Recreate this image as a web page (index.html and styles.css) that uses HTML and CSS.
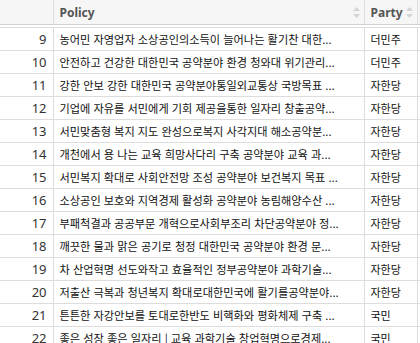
FILE: index.html
```html
<!DOCTYPE html>
<html lang="ko">
<head>
<meta charset="utf-8">
<link rel="stylesheet" href="styles.css">
</head>
<body>
<div class="frame">
  <table class="head">
    <colgroup><col class="c-num"><col class="c-pol"><col class="c-par"><col class="c-rest"></colgroup>
    <tr>
      <th></th>
      <th><div class="th-in"><span>Policy</span><svg class="sort" width="7" height="11" viewBox="0 0 7 11"><path d="M3.5 0 L7 4 L0 4 Z M3.5 11 L7 7 L0 7 Z" fill="#d4d4d4"/></svg></div></th>
      <th><div class="th-in"><span>Party</span><svg class="sort" width="7" height="11" viewBox="0 0 7 11"><path d="M3.5 0 L7 4 L0 4 Z M3.5 11 L7 7 L0 7 Z" fill="#d4d4d4"/></svg></div></th>
      <th></th>
    </tr>
  </table>
  <div class="gap"></div>
  <table class="body">
    <colgroup><col class="c-num"><col class="c-pol"><col class="c-par"><col class="c-rest"></colgroup>
    <tr><td class="num">9</td><td class="pol">농어민 자영업자 소상공인의소득이 늘어나는 활기찬 대한...</td><td class="par">더민주</td><td></td></tr>
    <tr><td class="num">10</td><td class="pol">안전하고 건강한 대한민국 공약분야 환경 청와대 위기관리...</td><td class="par">더민주</td><td></td></tr>
    <tr><td class="num">11</td><td class="pol">강한 안보 강한 대한민국 공약분야통일외교통상 국방목표 ...</td><td class="par">자한당</td><td></td></tr>
    <tr><td class="num">12</td><td class="pol">기업에 자유를 서민에게 기회 제공을통한 일자리 창출공약...</td><td class="par">자한당</td><td></td></tr>
    <tr><td class="num">13</td><td class="pol">서민맞춤형 복지 지도 완성으로복지 사각지대 해소공약분...</td><td class="par">자한당</td><td></td></tr>
    <tr><td class="num">14</td><td class="pol">개천에서 용 나는 교육 희망사다리 구축 공약분야 교육 과...</td><td class="par">자한당</td><td></td></tr>
    <tr><td class="num">15</td><td class="pol">서민복지 확대로 사회안전망 조성 공약분야 보건복지 목표 ...</td><td class="par">자한당</td><td></td></tr>
    <tr><td class="num">16</td><td class="pol">소상공인 보호와 지역경제 활성화 공약분야 농림해양수산 ...</td><td class="par">자한당</td><td></td></tr>
    <tr><td class="num">17</td><td class="pol">부패척결과 공공부문 개혁으로사회부조리 차단공약분야 정...</td><td class="par">자한당</td><td></td></tr>
    <tr><td class="num">18</td><td class="pol">깨끗한 물과 맑은 공기로 청정 대한민국 공약분야 환경 문...</td><td class="par">자한당</td><td></td></tr>
    <tr><td class="num">19</td><td class="pol">차 산업혁명 선도와작고 효율적인 정부공약분야 과학기술...</td><td class="par">자한당</td><td></td></tr>
    <tr><td class="num">20</td><td class="pol">저출산 극복과 청년복지 확대로대한민국에 활기를공약분야...</td><td class="par">자한당</td><td></td></tr>
    <tr><td class="num">21</td><td class="pol">튼튼한 자강안보를 토대로한반도 비핵화와 평화체제 구축 ...</td><td class="par">국민</td><td></td></tr>
    <tr><td class="num">22</td><td class="pol">좋은 성장 좋은 일자리 | 교육 과학기술 창업혁명으로경제...</td><td class="par">국민</td><td></td></tr>
  </table>
</div>
</body>
</html>
```
FILE: styles.css
```css
html, body {
  margin: 0;
  padding: 0;
  background: #ffffff;
}
.frame {
  width: 420px;
  height: 343px;
  overflow: hidden;
  font-family: "Noto Sans", "Noto Sans CJK KR", sans-serif;
  color: #333333;
}
table {
  border-collapse: collapse;
  table-layout: fixed;
  width: 440px;
}
.c-num { width: 53px; }
.c-pol { width: 311px; }
.c-par { width: 53px; }
.c-rest { width: 23px; }
.head th {
  height: 24px;
  padding: 0;
  background: #f6f6f6;
  border-left: 1px solid #dddddd;
  border-bottom: 1px solid #d0d0d0;
  text-align: left;
  font-weight: bold;
  font-size: 12px;
  color: #555555;
}
.head th:first-child { border-left: none; }
.th-in {
  display: flex;
  align-items: center;
  justify-content: space-between;
  padding: 0 4px 0 6px;
}
.sort { flex: none; }
.gap { height: 2px; }
.body td {
  height: 22px;
  padding: 0;
  border: 1px solid #dddddd;
  white-space: nowrap;
  overflow: hidden;
  vertical-align: middle;
}
.body td:first-child { border-left: none; }
.num {
  text-align: right;
  padding-right: 6px !important;
  font-size: 13px;
  color: #333333;
}
.pol {
  padding-left: 6px !important;
  font-family: "Noto Sans CJK KR", sans-serif;
  font-size: 11.2px;
  color: #111111;
}
.par {
  padding-left: 6px !important;
  font-family: "Noto Sans CJK KR", sans-serif;
  font-size: 11px;
  color: #111111;
}
```
